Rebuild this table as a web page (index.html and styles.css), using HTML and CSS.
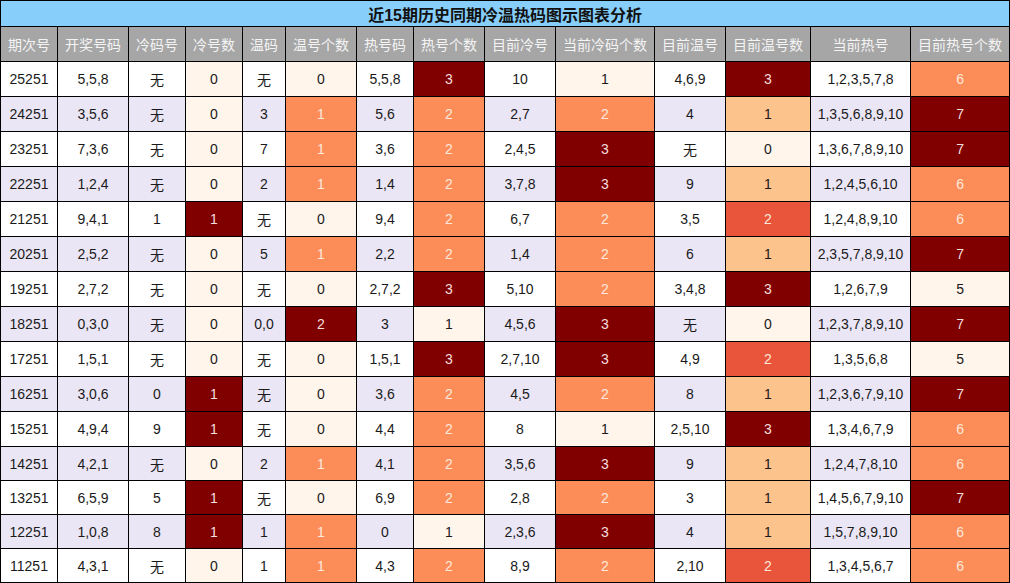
FILE: index.html
```html
<!DOCTYPE html>
<html lang="zh">
<head>
<meta charset="utf-8">
<title>近15期历史同期冷温热码图示图表分析</title>
<link rel="stylesheet" href="styles.css">
</head>
<body>
<table class="chart">
<colgroup>
<col class="w57"><col class="w71"><col class="w57"><col class="w57"><col class="w43"><col class="w71"><col class="w57"><col class="w71"><col class="w71"><col class="w99"><col class="w71"><col class="w85"><col class="w100"><col class="w99">
</colgroup>
<thead>
<tr class="title"><th colspan="14">近15期历史同期冷温热码图示图表分析</th></tr>
<tr class="head">
<th>期次号</th><th>开奖号码</th><th>冷码号</th><th>冷号数</th><th>温码</th><th>温号个数</th><th>热号码</th><th>热号个数</th><th>目前冷号</th><th>当前冷码个数</th><th>目前温号</th><th>目前温号数</th><th>当前热号</th><th>目前热号个数</th>
</tr>
</thead>
<tbody>
<tr class="r35"><td>25251</td><td>5,5,8</td><td>无</td><td class="c0">0</td><td>无</td><td class="c0">0</td><td>5,5,8</td><td class="c3">3</td><td>10</td><td class="c0">1</td><td>4,6,9</td><td class="c3">3</td><td>1,2,3,5,7,8</td><td class="c2">6</td></tr>
<tr class="r35 alt"><td>24251</td><td>3,5,6</td><td>无</td><td class="c0">0</td><td>3</td><td class="c2">1</td><td>5,6</td><td class="c2">2</td><td>2,7</td><td class="c2">2</td><td>4</td><td class="c1">1</td><td>1,3,5,6,8,9,10</td><td class="c3">7</td></tr>
<tr class="r35"><td>23251</td><td>7,3,6</td><td>无</td><td class="c0">0</td><td>7</td><td class="c2">1</td><td>3,6</td><td class="c2">2</td><td>2,4,5</td><td class="c3">3</td><td>无</td><td class="c0">0</td><td>1,3,6,7,8,9,10</td><td class="c3">7</td></tr>
<tr class="r35 alt"><td>22251</td><td>1,2,4</td><td>无</td><td class="c0">0</td><td>2</td><td class="c2">1</td><td>1,4</td><td class="c2">2</td><td>3,7,8</td><td class="c3">3</td><td>9</td><td class="c1">1</td><td>1,2,4,5,6,10</td><td class="c2">6</td></tr>
<tr class="r35"><td>21251</td><td>9,4,1</td><td>1</td><td class="c3">1</td><td>无</td><td class="c0">0</td><td>9,4</td><td class="c2">2</td><td>6,7</td><td class="c2">2</td><td>3,5</td><td class="cr">2</td><td>1,2,4,8,9,10</td><td class="c2">6</td></tr>
<tr class="r35 alt"><td>20251</td><td>2,5,2</td><td>无</td><td class="c0">0</td><td>5</td><td class="c2">1</td><td>2,2</td><td class="c2">2</td><td>1,4</td><td class="c2">2</td><td>6</td><td class="c1">1</td><td>2,3,5,7,8,9,10</td><td class="c3">7</td></tr>
<tr class="r35"><td>19251</td><td>2,7,2</td><td>无</td><td class="c0">0</td><td>无</td><td class="c0">0</td><td>2,7,2</td><td class="c3">3</td><td>5,10</td><td class="c2">2</td><td>3,4,8</td><td class="c3">3</td><td>1,2,6,7,9</td><td class="c0">5</td></tr>
<tr class="r35 alt"><td>18251</td><td>0,3,0</td><td>无</td><td class="c0">0</td><td>0,0</td><td class="c3">2</td><td>3</td><td class="c0">1</td><td>4,5,6</td><td class="c3">3</td><td>无</td><td class="c0">0</td><td>1,2,3,7,8,9,10</td><td class="c3">7</td></tr>
<tr class="r35"><td>17251</td><td>1,5,1</td><td>无</td><td class="c0">0</td><td>无</td><td class="c0">0</td><td>1,5,1</td><td class="c3">3</td><td>2,7,10</td><td class="c3">3</td><td>4,9</td><td class="cr">2</td><td>1,3,5,6,8</td><td class="c0">5</td></tr>
<tr class="r35 alt"><td>16251</td><td>3,0,6</td><td>0</td><td class="c3">1</td><td>无</td><td class="c0">0</td><td>3,6</td><td class="c2">2</td><td>4,5</td><td class="c2">2</td><td>8</td><td class="c1">1</td><td>1,2,3,6,7,9,10</td><td class="c3">7</td></tr>
<tr class="r35"><td>15251</td><td>4,9,4</td><td>9</td><td class="c3">1</td><td>无</td><td class="c0">0</td><td>4,4</td><td class="c2">2</td><td>8</td><td class="c0">1</td><td>2,5,10</td><td class="c3">3</td><td>1,3,4,6,7,9</td><td class="c2">6</td></tr>
<tr class="r34 alt"><td>14251</td><td>4,2,1</td><td>无</td><td class="c0">0</td><td>2</td><td class="c2">1</td><td>4,1</td><td class="c2">2</td><td>3,5,6</td><td class="c3">3</td><td>9</td><td class="c1">1</td><td>1,2,4,7,8,10</td><td class="c2">6</td></tr>
<tr class="r34"><td>13251</td><td>6,5,9</td><td>5</td><td class="c3">1</td><td>无</td><td class="c0">0</td><td>6,9</td><td class="c2">2</td><td>2,8</td><td class="c2">2</td><td>3</td><td class="c1">1</td><td>1,4,5,6,7,9,10</td><td class="c3">7</td></tr>
<tr class="r34 alt"><td>12251</td><td>1,0,8</td><td>8</td><td class="c3">1</td><td>1</td><td class="c2">1</td><td>0</td><td class="c0">1</td><td>2,3,6</td><td class="c3">3</td><td>4</td><td class="c1">1</td><td>1,5,7,8,9,10</td><td class="c2">6</td></tr>
<tr class="r34"><td>11251</td><td>4,3,1</td><td>无</td><td class="c0">0</td><td>1</td><td class="c2">1</td><td>4,3</td><td class="c2">2</td><td>8,9</td><td class="c2">2</td><td>2,10</td><td class="cr">2</td><td>1,3,4,5,6,7</td><td class="c2">6</td></tr>
</tbody>
</table>
</body>
</html>
```

FILE: styles.css
```css
html, body {
  margin: 0;
  padding: 0;
  background: #ffffff;
}

.chart {
  width: 1010px;
  table-layout: fixed;
  border-collapse: collapse;
  font-family: "Liberation Sans", "Noto Sans CJK SC", sans-serif;
  font-size: 14px;
  color: #1a1a1a;
}

.w43 { width: 43px; }
.w57 { width: 57px; }
.w71 { width: 71px; }
.w85 { width: 85px; }
.w99 { width: 99px; }
.w100 { width: 100px; }

.chart th,
.chart td {
  border: 1px solid #000000;
  padding: 0;
  text-align: center;
  vertical-align: middle;
  white-space: nowrap;
  overflow: hidden;
}

.title th {
  height: 25px;
  background: #87cefa;
  font-family: "Liberation Sans", "Noto Sans CJK SC", sans-serif;
  font-size: 16px;
  font-weight: bold;
  color: #111111;
}

.head th {
  height: 34px;
  background: #a6a6a6;
  color: #f4f4f4;
  font-family: "Noto Sans CJK SC", sans-serif;
  font-size: 14px;
  font-weight: normal;
}

.r35 td { height: 34px; }
.r34 td { height: 33px; }

.alt td { background: #ebe6f5; }

.chart td.c0 { background: #fff5eb; color: #1a1a1a; }
.chart td.c1 { background: #fdc38d; color: #1a1a1a; }
.chart td.c2 { background: #fc8d59; color: #fde9dc; }
.chart td.cr { background: #e8553a; color: #fde9dc; }
.chart td.c3 { background: #800000; color: #f5dede; }
```
